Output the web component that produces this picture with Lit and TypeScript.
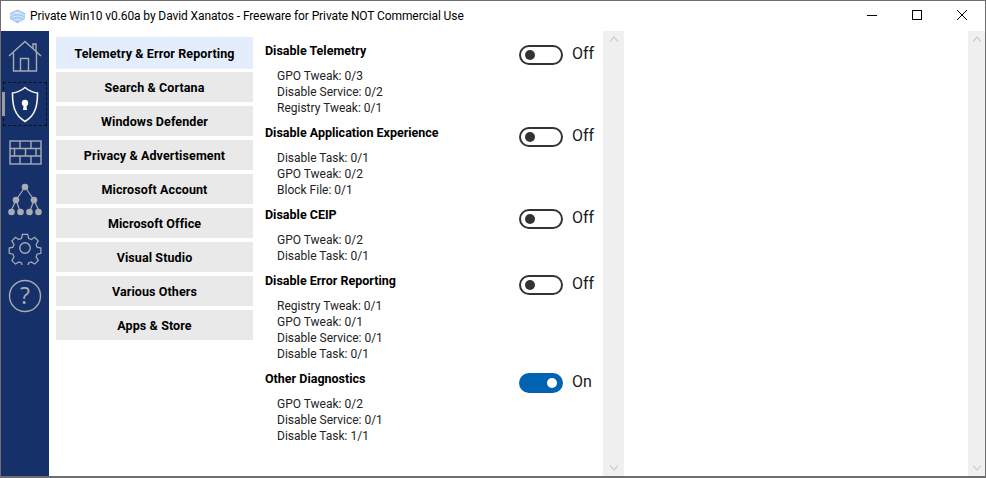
import { LitElement, html, css, svg } from "lit";
import { customElement } from "lit/decorators.js";

const cats = ["Telemetry & Error Reporting","Search & Cortana","Windows Defender","Privacy & Advertisement","Microsoft Account","Microsoft Office","Visual Studio","Various Others","Apps & Store"];
const sections = [
  { t: "Disable Telemetry", on: false, d: ["GPO Tweak: 0/3","Disable Service: 0/2","Registry Tweak: 0/1"] },
  { t: "Disable Application Experience", on: false, d: ["Disable Task: 0/1","GPO Tweak: 0/2","Block File: 0/1"] },
  { t: "Disable CEIP", on: false, d: ["GPO Tweak: 0/2","Disable Task: 0/1"] },
  { t: "Disable Error Reporting", on: false, d: ["Registry Tweak: 0/1","GPO Tweak: 0/1","Disable Service: 0/1","Disable Task: 0/1"] },
  { t: "Other Diagnostics", on: true, d: ["GPO Tweak: 0/2","Disable Service: 0/1","Disable Task: 1/1"] },
];

const gray = "#a9abb3";
const icons = [
  svg`<svg class="ic" width="34" height="32" viewBox="0 0 34 32" fill="none" stroke="${gray}" stroke-width="1.4"><path d="M1 16 17 1.500 33 16"/><path d="M25 8.500V4h3v8.500"/><path d="M5.500 13V31h23V13"/><path d="M12.500 31V18.500h8V31"/></svg>`,
  svg`<svg class="ic" width="28" height="37" viewBox="0 0 28 37" fill="none"><path d="M14 1.500C10 5 6 6.500 1.500 7c0 12 1.500 22 12.500 28.500C25 29 26.500 19 26.500 7 22 6.500 18 5 14 1.500Z" stroke="#f0f1f4" stroke-width="1.6"/><circle cx="14" cy="17" r="3.200" fill="#fff"/><path d="M12.800 18h2.400l.8 6h-4Z" fill="#fff"/></svg>`,
  svg`<svg class="ic" width="33" height="25" viewBox="0 0 33 25" fill="none" stroke="${gray}" stroke-width="1.4"><rect x="1" y="1" width="31" height="23"/><path d="M1 8.500h31M1 16h31M11 1v7.500M22 1v7.500M5.500 8.500V16M16.500 8.500V16M27 8.500V16M11 16v8M22 16v8"/></svg>`,
  svg`<svg class="ic" width="34" height="34" viewBox="0 0 34 34" fill="none" stroke="${gray}" stroke-width="1.200"><path d="M17 4 8 17M17 4l9 13M8 17l-5 11M8 17l4 11M26 17l-4 11M26 17l5 11"/><g fill="${gray}" stroke="none"><circle cx="17" cy="4" r="3.300"/><circle cx="8" cy="17" r="3.300"/><circle cx="26" cy="17" r="3.300"/><circle cx="3.500" cy="29" r="3.300"/><circle cx="12.500" cy="29" r="3.300"/><circle cx="21.500" cy="29" r="3.300"/><circle cx="30.500" cy="29" r="3.300"/></g></svg>`,
  svg`<svg class="ic" width="34" height="34" viewBox="0 0 34 34" fill="none" stroke="${gray}" stroke-width="1.4"><path d="M14 1.500h6l1 4.500 3 1.300 4-2.500 4 4.200-2.500 4 1.200 3 4.300 1v6l-4.300 1-1.200 3 2.500 4-4 4.200-4-2.500-3 1.300-1 4.500h-6l-1-4.500-3-1.300-4 2.500-4-4.200 2.500-4-1.200-3-4.300-1v-6l4.300-1 1.200-3-2.500-4 4-4.200 4 2.500 3-1.300Z" transform="translate(2.100 2.100) scale(.88)"/><circle cx="17" cy="17" r="5.200"/></svg>`,
  svg`<svg class="ic" width="34" height="34" viewBox="0 0 34 34" fill="none" stroke="${gray}" stroke-width="1.4"><circle cx="17" cy="17" r="15.500"/><text x="17" y="25" text-anchor="middle" font-family="Open Sans, sans-serif" font-size="23" fill="${gray}" stroke="none">?</text></svg>`,
];

@customElement("app-root")
export class AppRoot extends LitElement {
  static styles = css`
    :host { display: block; width: 986px; height: 478px; font-family: Roboto, "Noto Sans", sans-serif; color: #000; }
    * { box-sizing: border-box; }
    .win { width: 986px; height: 478px; border: 1px solid #6e6e6e; border-bottom-width: 2px; background: #fff; display: flex; flex-direction: column; overflow: hidden; }
    .title { height: 30px; display: flex; align-items: center; font-size: 12px; flex: none; }
    .logo { margin: 0 4px 0 8px; flex: none; }
    .title .txt { flex: 1; letter-spacing: -.1px; }
    .ctl { display: flex; flex: none; margin: 0 18px 2px 0; gap: 35px; align-items: center; }
    .body { flex: 1; display: flex; min-height: 0; }
    .rail { width: 48px; flex: none; background: #163169; display: flex; flex-direction: column; position: relative; padding-top: 1px; }
    .nav { height: 48px; display: flex; align-items: center; justify-content: center; flex: none; }
    .focus { position: absolute; left: 2px; top: 51px; width: 44px; height: 44px; border: 1px dashed #0b0f1c; }
    .mark { position: absolute; left: 1px; top: 61px; width: 3px; height: 24px; background: #9a9ca4; }
    .cats { width: 204px; flex: none; padding: 6px 0 0 7px; display: flex; flex-direction: column; gap: 4px; }
    .cat { width: 197px; height: 30px; background: #e9e9e9; display: flex; align-items: center; justify-content: center; font-size: 12.500px; letter-spacing: .1px; font-weight: 700; flex: none; }
    .cat.sel { background: #e3edfb; height: 32px; margin-bottom: -1px; }
    .main { width: 350px; flex: none; padding: 2px 0 0 12px; }
    .head { height: 34px; display: flex; justify-content: space-between; }
    .name { font-size: 12.500px; font-weight: 700; line-height: 16px; padding-top: 10px; }
    .sw { display: flex; align-items: center; gap: 9px; width: 76px; font-size: 16px; height: 20px; margin-top: 12px; margin-right: 8px; line-height: 20px; color: #1a1a1a; }
    .lbl { padding-bottom: 2px; }
    .tog { width: 44px; height: 20px; border: 2px solid #333; border-radius: 10px; display: flex; align-items: center; padding: 0 4px; flex: none; }
    .tog i { width: 10px; height: 10px; border-radius: 50%; background: #333; display: block; }
    .tog.on { background: #0063b1; border-color: #0063b1; justify-content: flex-end; }
    .tog.on i { background: #fff; }
    .det { padding: 1px 0 0 12px; margin-bottom: -1px; font-size: 12px; line-height: 16px; color: #222; }
    .bar { width: 21px; flex: none; background: #f0f0f0; display: flex; flex-direction: column; justify-content: space-between; align-items: center; padding: 5px 0; }
    .bar.r { width: 17px; }
    .panel { flex: 1; }
  `;

  private chev(up: boolean) {
    return svg`<svg width="10" height="6" viewBox="0 0 10 6" fill="none" stroke="#cfcfcf" stroke-width="1.200"><path d="${up ? "M1 5.500 5 1l4 4.500" : "M1 .5 5 5l4-4.500"}"/></svg>`;
  }

  render() {
    return html`<div class="win">
      <div class="title">
        <svg class="logo" width="17" height="15" viewBox="0 0 17 15" fill="none"><path d="M8.500 .5 16 4v6l-7.500 4.500L1 10V4Z" fill="#a9cdf0"/><path d="M1.500 6.500c4-3 10-3 14 0M2.500 9c3.500-2.500 8.500-2.500 12 0M5 11.500c2-1.500 5-1.500 7 0M6 3.500h5" stroke="#eef6fd" stroke-width=".8"/></svg>
        <span class="txt">Private Win10 v0.60a by David Xanatos - Freeware for Private NOT Commercial Use</span>
        <div class="ctl">
          <svg width="10" height="10" viewBox="0 0 10 10" stroke="#000" fill="none"><path d="M0 5.500h10"/></svg>
          <svg width="10" height="10" viewBox="0 0 10 10" stroke="#000" fill="none"><rect x=".5" y=".5" width="9" height="9"/></svg>
          <svg width="10" height="10" viewBox="0 0 10 10" stroke="#000" fill="none"><path d="M0 0l10 10M10 0 0 10"/></svg>
        </div>
      </div>
      <div class="body">
        <div class="rail">
          <div class="focus"></div><div class="mark"></div>
          ${icons.map((i) => html`<div class="nav">${i}</div>`)}
        </div>
        <div class="cats">
          ${cats.map((c, i) => html`<div class="cat ${i === 0 ? "sel" : ""}">${c}</div>`)}
        </div>
        <div class="main">
          ${sections.map((s) => html`<div class="sec">
            <div class="head">
              <div class="name">${s.t}</div>
              <div class="sw"><span class="tog ${s.on ? "on" : ""}"><i></i></span><span class="lbl">${s.on ? "On" : "Off"}</span></div>
            </div>
            <div class="det">${s.d.map((x) => html`<div>${x}</div>`)}</div>
          </div>`)}
        </div>
        <div class="bar">${this.chev(true)}${this.chev(false)}</div>
        <div class="panel"></div>
        <div class="bar r">${this.chev(true)}${this.chev(false)}</div>
      </div>
    </div>`;
  }
}
